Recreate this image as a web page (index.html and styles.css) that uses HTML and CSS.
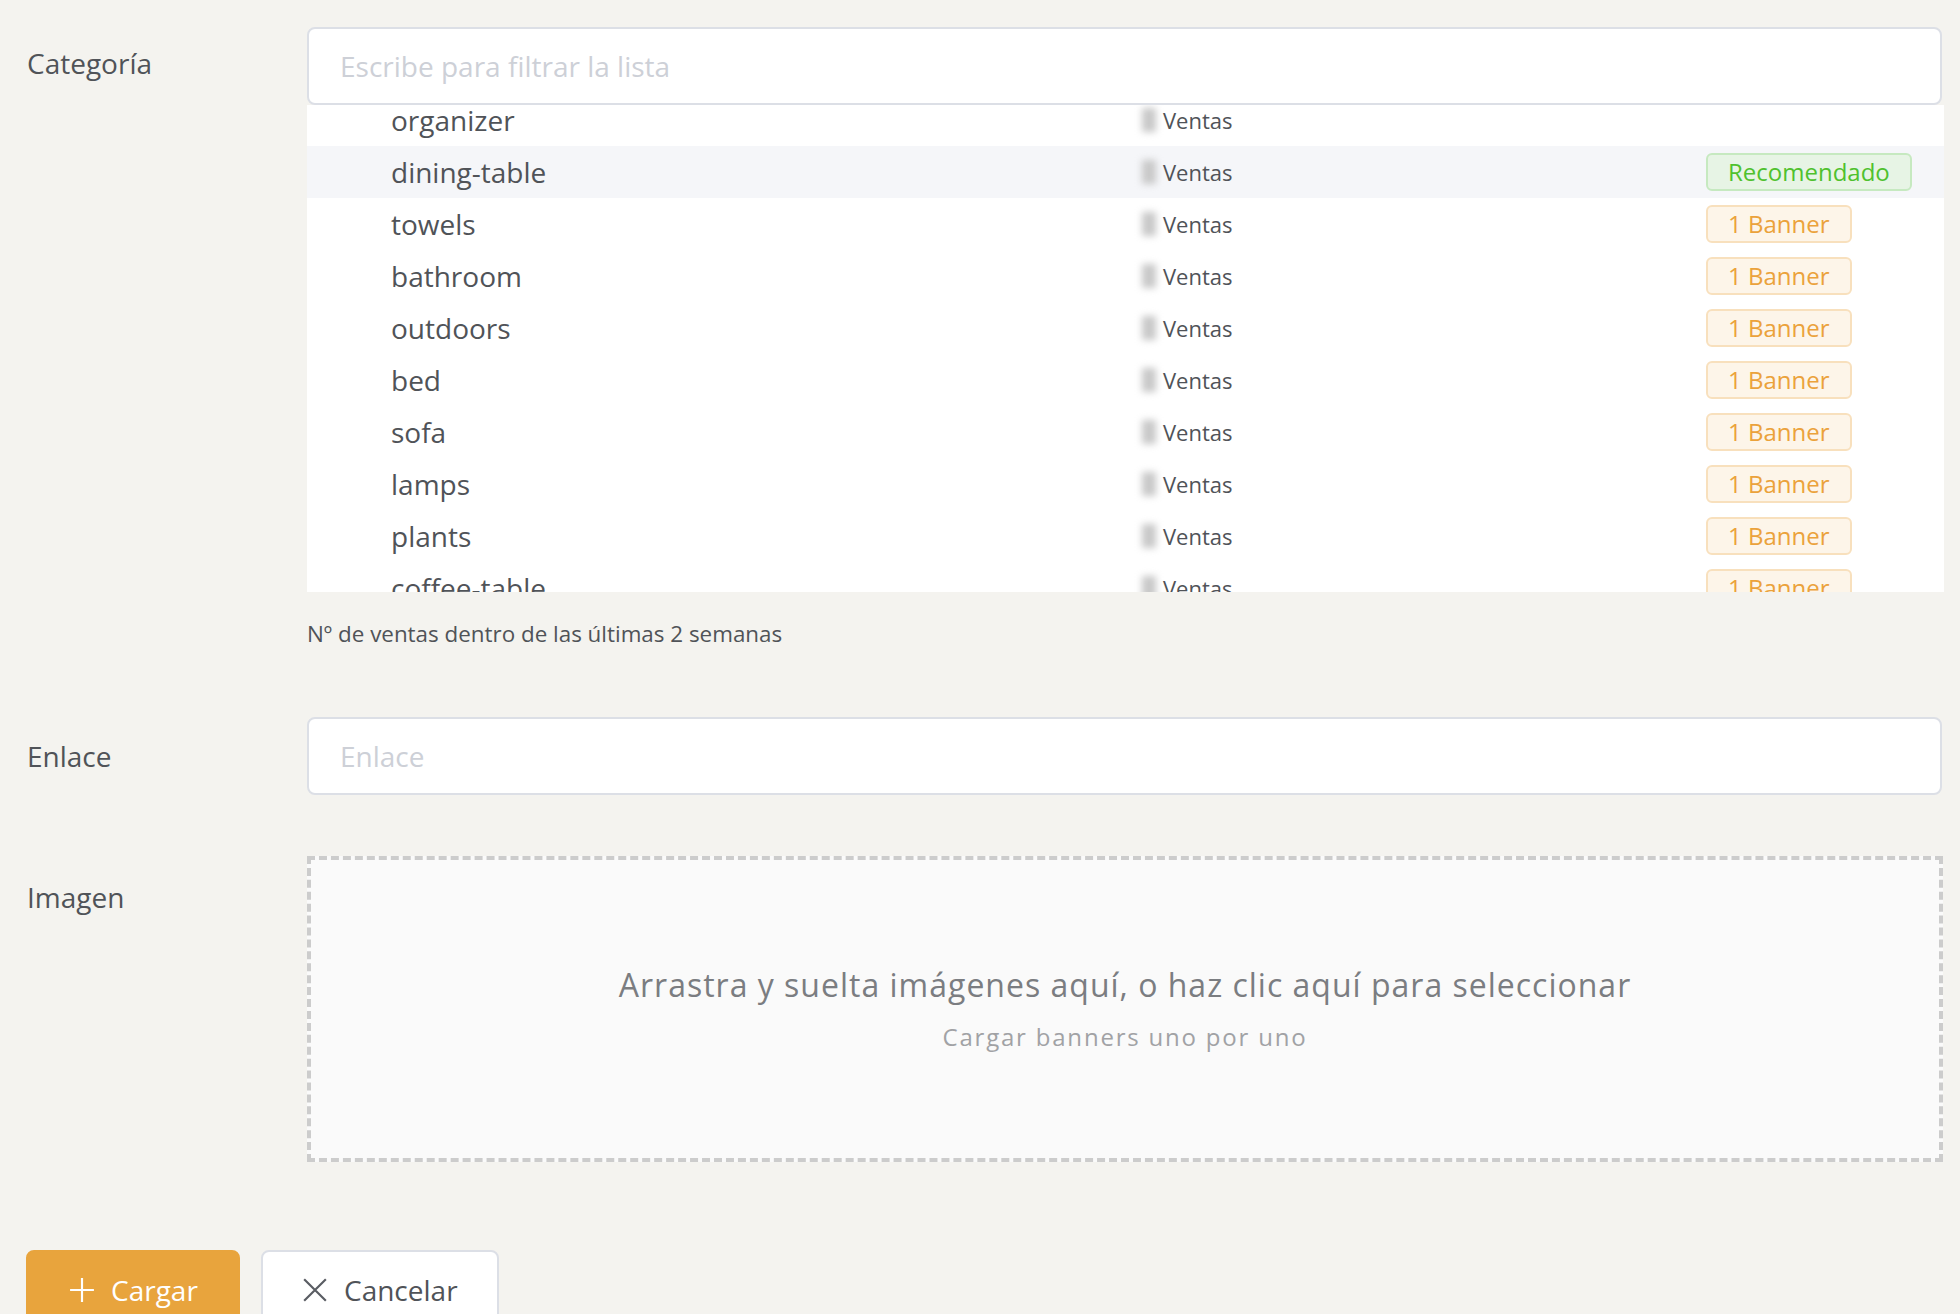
FILE: index.html
```html
<!DOCTYPE html>
<html lang="es">
<head>
<meta charset="utf-8">
<title>Banner</title>
<link rel="stylesheet" href="styles.css">
</head>
<body>
<div class="page">
  <div class="form-item">
    <div class="label label-cat">Categoría</div>
    <div class="control">
      <div class="input"><span class="placeholder">Escribe para filtrar la lista</span></div>
      <div class="list">
        <div class="list-inner">
          <div class="row"><span class="name">organizer</span><span class="sales"><span class="blur"></span>Ventas</span><span class="tagcell"></span></div>
          <div class="row active"><span class="name">dining-table</span><span class="sales"><span class="blur"></span>Ventas</span><span class="tagcell"><span class="tag green">Recomendado</span></span></div>
          <div class="row"><span class="name">towels</span><span class="sales"><span class="blur"></span>Ventas</span><span class="tagcell"><span class="tag orange">1 Banner</span></span></div>
          <div class="row"><span class="name">bathroom</span><span class="sales"><span class="blur"></span>Ventas</span><span class="tagcell"><span class="tag orange">1 Banner</span></span></div>
          <div class="row"><span class="name">outdoors</span><span class="sales"><span class="blur"></span>Ventas</span><span class="tagcell"><span class="tag orange">1 Banner</span></span></div>
          <div class="row"><span class="name">bed</span><span class="sales"><span class="blur"></span>Ventas</span><span class="tagcell"><span class="tag orange">1 Banner</span></span></div>
          <div class="row"><span class="name">sofa</span><span class="sales"><span class="blur"></span>Ventas</span><span class="tagcell"><span class="tag orange">1 Banner</span></span></div>
          <div class="row"><span class="name">lamps</span><span class="sales"><span class="blur"></span>Ventas</span><span class="tagcell"><span class="tag orange">1 Banner</span></span></div>
          <div class="row"><span class="name">plants</span><span class="sales"><span class="blur"></span>Ventas</span><span class="tagcell"><span class="tag orange">1 Banner</span></span></div>
          <div class="row"><span class="name">coffee-table</span><span class="sales"><span class="blur"></span>Ventas</span><span class="tagcell"><span class="tag orange">1 Banner</span></span></div>
        </div>
      </div>
      <div class="help">Nº de ventas dentro de las últimas 2 semanas</div>
    </div>
  </div>

  <div class="form-item link-item">
    <div class="label">Enlace</div>
    <div class="control">
      <div class="input"><span class="placeholder">Enlace</span></div>
    </div>
  </div>

  <div class="form-item image-item">
    <div class="label label-img">Imagen</div>
    <div class="control">
      <div class="dropzone">
        <div class="drop-main">Arrastra y suelta imágenes aquí, o haz clic aquí para seleccionar</div>
        <div class="drop-sub">Cargar banners uno por uno</div>
      </div>
    </div>
  </div>

  <div class="actions">
    <button class="btn primary"><svg class="ico" viewBox="0 0 24 24" width="26" height="26"><path d="M12 1v22M1 12h22" stroke="#fff" stroke-width="2" fill="none"/></svg>Cargar</button>
    <button class="btn default"><svg class="ico" viewBox="0 0 24 24" width="26" height="26"><path d="M2 2l20 20M22 2L2 22" stroke="#5a5d63" stroke-width="2" fill="none"/></svg>Cancelar</button>
  </div>
</div>
</body>
</html>
```

FILE: styles.css
```css
* { box-sizing: border-box; }
html, body { margin: 0; padding: 0; }
body {
  background: #f4f3ef;
  font-family: "Open Sans", "Noto Sans", sans-serif;
  color: #505358;
  width: 1960px;
  height: 1314px;
  overflow: hidden;
}
.page {
  padding: 27px 18px 0 26px;
}
.form-item {
  display: grid;
  grid-template-columns: 281px 1fr;
}
.label {
  font-size: 28px;
  line-height: 78px;
  height: 78px;
  color: #505358;
  padding-left: 1px;
}
.label-cat { margin-top: -3px; }
.label-img { margin-top: 2px; }
.control { min-width: 0; }
.input {
  height: 78px;
  background: #fff;
  border: 2px solid #dcdfe6;
  border-radius: 8px;
  padding: 0 31px;
  display: flex;
  align-items: center;
  font-size: 28px;
}
.placeholder { color: #cdd0d7; }
.list {
  height: 487px;
  overflow: hidden;
  background: #fff;
  margin-right: -2px;
}
.list-inner { margin-top: -11px; }
.row {
  height: 52px;
  display: grid;
  grid-template-columns: 833px 566px 1fr;
  align-items: center;
}
.row.active { background: #f5f6f9; }
.name {
  padding-left: 84px;
  font-size: 28px;
  color: #505358;
}
.sales {
  display: flex;
  align-items: center;
  font-size: 22px;
  color: #505358;
}
.blur {
  width: 14px;
  height: 24px;
  margin: 0 7px 0 2px;
  background: #c8c8c8;
  filter: blur(3.5px);
  flex: none;
}
.tagcell { display: flex; align-items: center; }
.tag {
  display: inline-block;
  font-size: 24px;
  line-height: 34px;
  padding: 0 20px;
  border: 2px solid;
  border-radius: 6px;
}
.tag.green { color: #4fc12e; background: #e7f4e5; border-color: #c6e9c0; }
.tag.orange { color: #eba23b; background: #fdf5e9; border-color: #f8e0bd; }
.help {
  margin-top: 27px;
  font-size: 22.4px;
  line-height: 30px;
  color: #505358;
}
.link-item { margin-top: 68px; }
.image-item { margin-top: 61px; }
.dropzone {
  height: 306px;
  background: #fafafa;
  border: 4px dashed #cccccc;
  margin-right: -1px;
  display: flex;
  flex-direction: column;
  align-items: center;
  justify-content: center;
  text-align: center;
  padding-bottom: 2px;
}
.drop-main {
  font-size: 32px;
  line-height: 44px;
  color: #7b7d81;
  letter-spacing: 1px;
}
.drop-sub {
  margin-top: 14px;
  font-size: 24px;
  line-height: 32px;
  color: #a1a2a5;
  letter-spacing: 1.8px;
}
.actions {
  margin-top: 88px;
  display: flex;
  gap: 21px;
}
.btn {
  height: 80px;
  border-radius: 8px;
  font-family: "Open Sans", "Noto Sans", sans-serif;
  font-size: 28px;
  display: flex;
  align-items: center;
  gap: 16px;
  cursor: pointer;
}
.btn.primary {
  width: 214px;
  background: #e8a43d;
  border: 2px solid #e8a43d;
  color: #fff;
  padding: 0 0 0 41px;
}
.btn.default {
  width: 238px;
  background: #fff;
  border: 2px solid #dcdfe6;
  color: #505358;
  padding: 0 0 0 39px;
}
.ico { flex: none; }
```
